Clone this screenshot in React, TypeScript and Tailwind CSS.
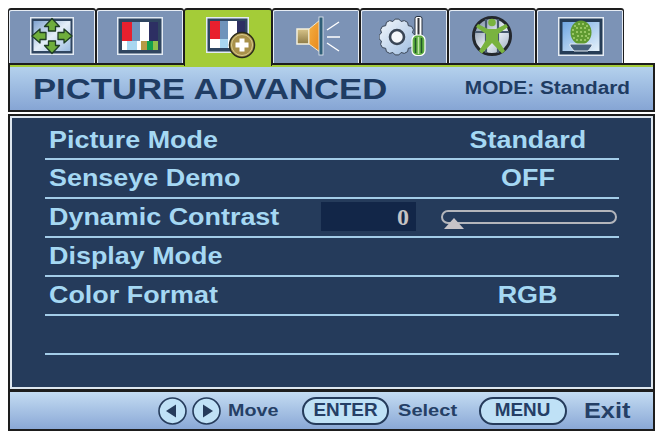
import { ReactNode } from 'react';

const sans = "font-['Liberation_Sans',Arial,sans-serif]";

// gear outline with square-ish rounded teeth
function gearPath(cx: number, cy: number, outer: number, inner: number, teeth: number) {
  const pts: string[] = [];
  for (let i = 0; i < teeth; i++) {
    const a = (i / teeth) * Math.PI * 2;
    const step = (Math.PI * 2) / teeth;
    [
      [inner, a - step * 0.5],
      [outer, a - step * 0.2],
      [outer, a + step * 0.2],
    ].forEach(([r, t]) => {
      pts.push(`${(cx + r * Math.cos(t)).toFixed(1)} ${(cy + r * Math.sin(t)).toFixed(1)}`);
    });
  }
  return `M${pts.join(' L')} Z`;
}

function Frame({ children }: { children: ReactNode }) {
  return (
    <svg width="44" height="38" viewBox="0 0 44 38">
      <rect x="0" y="0" width="44" height="38" fill="#e3ebf4" />
      <rect x="1.5" y="1.5" width="41" height="35" fill="#2f4560" />
      {children}
    </svg>
  );
}

function MoveIcon() {
  return (
    <Frame>
      <defs>
        <linearGradient id="mv" x1="0" y1="0" x2="1" y2="1">
          <stop offset="0" stopColor="#7fa3cf" />
          <stop offset="0.5" stopColor="#e4eef8" />
          <stop offset="1" stopColor="#9dbde2" />
        </linearGradient>
      </defs>
      <rect x="3.5" y="4" width="37" height="30" fill="url(#mv)" />
      <g fill="#6fae3c" stroke="#1f3d24" strokeWidth="1.3" strokeLinejoin="round">
        <path d="M22 1.5 L29.5 9.5 H25.5 V14 H18.5 V9.5 H14.5 Z" />
        <path d="M22 36.5 L29.5 28.5 H25.5 V24 H18.5 V28.5 H14.5 Z" />
        <path d="M2 19 L10 12 V15.5 H16 V22.5 H10 V26 Z" />
        <path d="M42 19 L34 12 V15.5 H28 V22.5 H34 V26 Z" />
      </g>
    </Frame>
  );
}

function BarsIcon() {
  return (
    <svg width="46" height="38" viewBox="0 0 46 38">
      <rect x="0" y="0" width="46" height="38" fill="#e3ebf4" />
      <rect x="1.5" y="1.5" width="43" height="35" fill="#2f4560" />
      <rect x="5" y="5" width="36" height="28" fill="#fff" />
      <rect x="5" y="5" width="10" height="19" fill="#e8202e" />
      <rect x="15" y="5" width="8" height="19" fill="#6f93bb" />
      <rect x="23" y="5" width="9" height="19" fill="#ffffff" />
      <rect x="32" y="5" width="9" height="19" fill="#2d2f63" />
      <rect x="5" y="24" width="5" height="9" fill="#ffffff" />
      <rect x="10" y="24" width="10" height="9" fill="#a8d6f0" />
      <rect x="20" y="24" width="4" height="9" fill="#ffffff" />
      <rect x="24" y="24" width="6" height="9" fill="#b79a46" />
      <rect x="30" y="24" width="6" height="9" fill="#12a04e" />
      <rect x="36" y="24" width="5" height="9" fill="#8fbf4a" />
    </svg>
  );
}

function BarsPlusIcon() {
  return (
    <svg width="50" height="42" viewBox="0 0 50 42">
      <rect x="0" y="0" width="43" height="36" fill="#e3ebf4" />
      <rect x="1.5" y="1.5" width="40" height="33" fill="#2f4560" />
      <rect x="4" y="4" width="35" height="27" fill="#fff" />
      <rect x="4" y="4" width="10" height="18" fill="#e8202e" />
      <rect x="14" y="4" width="8" height="18" fill="#6f93bb" />
      <rect x="22" y="4" width="9" height="18" fill="#ffffff" />
      <rect x="31" y="4" width="8" height="18" fill="#2d2f63" />
      <rect x="4" y="22" width="10" height="9" fill="#ffffff" />
      <rect x="14" y="22" width="8" height="9" fill="#a8d6f0" />
      <circle cx="36" cy="28" r="12.5" fill="#a8914a" stroke="#2a2a1c" strokeWidth="1.5" />
      <circle cx="36" cy="28" r="10.5" fill="none" stroke="#d8cb8e" strokeWidth="1" />
      <path d="M33.5 21.5 h5 v4 h4 v5 h-4 v4 h-5 v-4 h-4 v-5 h4 Z" fill="#fff" />
    </svg>
  );
}

function SpeakerIcon() {
  return (
    <svg width="46" height="40" viewBox="0 0 46 40">
      <defs>
        <linearGradient id="sp1" x1="0" y1="0" x2="0" y2="1">
          <stop offset="0" stopColor="#d8c48a" />
          <stop offset="1" stopColor="#8d7a45" />
        </linearGradient>
        <linearGradient id="sp2" x1="0" y1="0" x2="1" y2="1">
          <stop offset="0" stopColor="#f4b043" />
          <stop offset="1" stopColor="#e8861a" />
        </linearGradient>
      </defs>
      <rect x="1" y="13" width="12" height="15" fill="url(#sp1)" stroke="#f3f0dd" strokeWidth="1.5" />
      <path d="M13 13 L24 4 V36 L13 28 Z" fill="url(#sp2)" stroke="#efe8cf" strokeWidth="1" />
      <rect x="23" y="1" width="4" height="38" fill="#2f5f78" stroke="#e8eef4" strokeWidth="0.8" />
      <path d="M31 14 L43 6 M31 21 H44 M31 27 L43 35" stroke="#fff" strokeWidth="1.4" fill="none" />
    </svg>
  );
}

function GearIcon() {
  return (
    <svg width="50" height="40" viewBox="0 0 50 40">
      <defs>
        <linearGradient id="gr" x1="0" y1="0" x2="1" y2="1">
          <stop offset="0" stopColor="#f4f8fc" />
          <stop offset="1" stopColor="#9dbce0" />
        </linearGradient>
      </defs>
      <path d={gearPath(18, 21, 18, 16, 12)} fill="url(#gr)" stroke="#3a4656" strokeWidth="1" strokeLinejoin="round" />
      <circle cx="18" cy="21" r="7" fill="#f5f8fb" stroke="#3a4656" strokeWidth="2.6" />
      <rect x="36" y="0.5" width="7" height="20" rx="2" fill="#ffffff" stroke="#26303f" strokeWidth="1" />
      <rect x="38.5" y="2" width="2" height="17" fill="#33353a" />
      <rect x="33" y="19" width="13" height="20.5" rx="5" fill="#5fae40" stroke="#fff" strokeWidth="1.2" />
      <path d="M36.5 22 V37 M42.5 22 V37" stroke="#20562a" strokeWidth="1.5" />
      <path d="M39.5 21 V38" stroke="#bfe3a4" strokeWidth="1.5" />
    </svg>
  );
}

function EcoIcon() {
  return (
    <svg width="42" height="40" viewBox="0 0 42 40">
      <defs>
        <linearGradient id="ec" x1="0" y1="0" x2="1" y2="1">
          <stop offset="0" stopColor="#6a7c95" />
          <stop offset="0.55" stopColor="#e8eef5" />
          <stop offset="1" stopColor="#94a5ba" />
        </linearGradient>
      </defs>
      <circle cx="21" cy="20" r="18.5" fill="url(#ec)" stroke="#23272d" strokeWidth="3" />
      <path d="M4 16 H38 M15 3 V37 M27 3 V37" stroke="#46586e" strokeWidth="2.2" />
      <circle cx="21" cy="6.5" r="3.8" fill="#79b33f" />
      <path d="M7 8 L17 13 H25 L35 8 L37 11 L27 18 V24 L34 35 L31 37.5 L21 27 L11 37.5 L8 35 L15 24 V18 L5 11 Z" fill="#79b33f" />
    </svg>
  );
}

function PlantIcon() {
  const dots = [
    [17, 9], [21, 7], [25, 7], [29, 9], [15, 13], [19, 11], [23, 11], [27, 11], [31, 13],
    [15, 17], [19, 15], [23, 15], [27, 15], [31, 17], [16, 21], [20, 19], [24, 19], [28, 19], [30, 21],
    [19, 23], [23, 23], [27, 23],
  ];
  return (
    <svg width="46" height="39" viewBox="0 0 46 39">
      <defs>
        <linearGradient id="pl" x1="0" y1="0" x2="1" y2="1">
          <stop offset="0" stopColor="#6fa6e2" />
          <stop offset="1" stopColor="#e6f2fb" />
        </linearGradient>
      </defs>
      <rect x="0" y="0" width="46" height="39" fill="#e6edf5" />
      <rect x="1.5" y="1.5" width="43" height="36" fill="#253c56" />
      <rect x="4.5" y="5" width="37" height="29" fill="url(#pl)" />
      <ellipse cx="23" cy="15.5" rx="10.5" ry="12" fill="#5f9a30" />
      {dots.map(([x, y]) => (
        <circle key={`${x}-${y}`} cx={x} cy={y} r="1.1" fill="#a5d070" />
      ))}
      <path d="M12 27 H34 V29 L30 34 H16 L12 29 Z" fill="#48627e" stroke="#e6edf5" strokeWidth="1" />
    </svg>
  );
}

function Tab({ children, active }: { children: ReactNode; active?: boolean }) {
  return (
    <div
      className={
        active
          ? 'relative z-10 flex h-[58px] w-[88px] items-center justify-center rounded-t-[3px] border-x border-t-2 border-[#1d1d1d] bg-[#a4cc38] pb-[4px]'
          : 'flex h-[55px] w-[88px] items-center justify-center rounded-t-[3px] border-x border-t-2 border-[#1d1d1d] bg-[#7c93b6] shadow-[inset_1px_1px_0_#e6ecf4,inset_-1px_0_0_#e6ecf4] pb-[1px]'
      }
    >
      {children}
    </div>
  );
}

function RoundKey({ dir }: { dir: 'left' | 'right' }) {
  return (
    <svg width="29" height="28" viewBox="0 0 29 28">
      <ellipse cx="14.5" cy="14" rx="13.5" ry="13" fill="#bfe1f6" stroke="#253b5b" strokeWidth="1.6" />
      <path d={dir === 'left' ? 'M8 14 L18 7.5 V20.5 Z' : 'M21 14 L11 7.5 V20.5 Z'} fill="#253b5b" />
    </svg>
  );
}

function Wide({ children, className }: { children: ReactNode; className: string }) {
  return <span className={`inline-block whitespace-nowrap ${className}`}>{children}</span>;
}

function Row({ label, value, children }: { label: string; value?: string; children?: ReactNode }) {
  return (
    <div className="flex h-[39px] items-center border-b-2 border-[#a3cce8] text-[23px] font-bold text-[#a5d8f3] first:pt-[2px]">
      <div className="w-[276px] pl-[4px]">
        <Wide className="origin-left scale-x-[1.17]">{label}</Wide>
      </div>
      {children ? (
        children
      ) : (
        <div className="ml-[123px] w-[168px] text-center">
          <Wide className="origin-center scale-x-[1.17]">{value}</Wide>
        </div>
      )}
    </div>
  );
}

export default function App() {
  return (
    <div className={`h-[434px] w-[659px] overflow-hidden bg-white pl-[8px] pt-[8px] ${sans}`}>
      <div className="flex h-[55px] w-[616px] items-start">
        <Tab><MoveIcon /></Tab>
        <Tab><BarsIcon /></Tab>
        <Tab active><div className="pl-[6px] pt-[3px]"><BarsPlusIcon /></div></Tab>
        <Tab><div className="pl-[6px]"><SpeakerIcon /></div></Tab>
        <Tab><GearIcon /></Tab>
        <Tab><EcoIcon /></Tab>
        <Tab><div className="pl-[2px]"><PlantIcon /></div></Tab>
      </div>

      <div className="flex h-[49px] w-[647px] items-center justify-between border-2 border-[#1d1d1d] bg-gradient-to-b from-[#b6d3ee] to-[#86a5d4] pl-[23px] pr-[23px] pt-[2px] shadow-[inset_0_2px_0_#a4cc38]">
        <Wide className="origin-left scale-x-[1.155] text-[30px] font-bold leading-none text-[#1f3c63]">PICTURE ADVANCED</Wide>
        <Wide className="origin-right scale-x-[1.155] text-[18px] font-bold text-[#1f3c63]">MODE: Standard</Wide>
      </div>

      <div className="mt-[2px] h-[277px] w-[647px] border-2 border-[#1d1d1d] bg-[#253b5b] pl-[35px] pr-[34px] pt-[5px] shadow-[inset_0_0_0_2px_#dde6ef]">
        <Row label="Picture Mode" value="Standard" />
        <Row label="Senseye Demo" value="OFF" />
        <Row label="Dynamic Contrast">
          <div className="flex items-center pb-[2px]">
            <div className="flex h-[29px] w-[95px] items-center justify-end bg-[#122648] pr-[7px] font-['Liberation_Serif',serif] text-[24px] font-bold text-[#c4c2c4]">
              0
            </div>
            <div className="relative ml-[25px] h-[14px] w-[176px] rounded-full border-2 border-[#b4b6bc]">
              <div className="absolute left-[1px] top-[6px] h-0 w-0 border-x-[10px] border-b-[11px] border-x-transparent border-b-[#c8c4c8]" />
            </div>
          </div>
        </Row>
        <Row label="Display Mode" />
        <Row label="Color Format" value="RGB" />
        <Row label="" />
      </div>

      <div className="-mt-[1px] flex h-[41px] w-[647px] items-center border-2 border-[#1d1d1d] bg-gradient-to-b from-[#c4dcf2] to-[#8aa8d6] pl-[148px] font-bold text-[#253f66]">
        <div className="flex gap-[5px]">
          <RoundKey dir="left" />
          <RoundKey dir="right" />
        </div>
        <Wide className="ml-[7px] origin-left scale-x-[1.16] text-[17px]">Move</Wide>
        <span className="ml-[31px] flex h-[28px] w-[87px] items-center justify-center rounded-full border-2 border-[#253b5b] bg-[#bfe1f6] text-[18px]">
          <Wide className="scale-x-[1.05]">ENTER</Wide>
        </span>
        <Wide className="ml-[9px] origin-left scale-x-[1.18] text-[17px]">Select</Wide>
        <span className="ml-[30px] flex h-[28px] w-[88px] items-center justify-center rounded-full border-2 border-[#253b5b] bg-[#bfe1f6] text-[18px]">
          <Wide className="scale-x-[1.05]">MENU</Wide>
        </span>
        <Wide className="ml-[17px] origin-left scale-x-[1.15] text-[22px]">Exit</Wide>
      </div>
    </div>
  );
}
